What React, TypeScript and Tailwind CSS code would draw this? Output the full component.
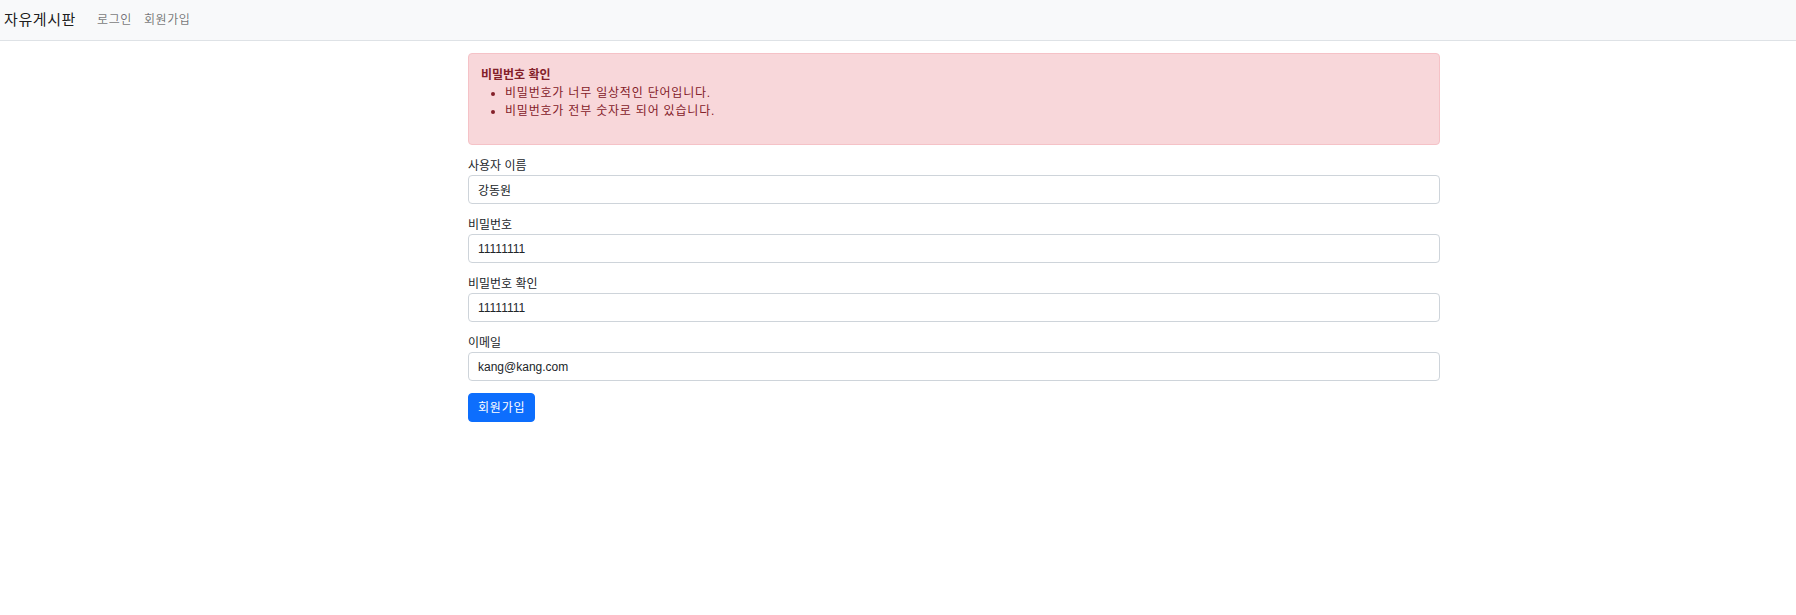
import React from 'react';

const fields = [
  { label: '사용자 이름', value: '강동원', type: 'text' },
  { label: '비밀번호', value: '11111111', type: 'text' },
  { label: '비밀번호 확인', value: '11111111', type: 'text' },
  { label: '이메일', value: 'kang@kang.com', type: 'email' },
];

const errors = ['비밀번호가 너무 일상적인 단어입니다.', '비밀번호가 전부 숫자로 되어 있습니다.'];

const App: React.FC = () => (
  <div className="min-h-[615px] bg-white text-[#212529] text-[12px] leading-[18px] font-['Liberation_Sans','Noto_Sans_CJK_KR',sans-serif]">
    {/* Navbar */}
    <nav className="h-[41px] bg-[#f8f9fa] border-b border-[#dee2e6] flex items-center pl-[4px]">
      <a href="#" className="text-[15px] leading-[22px] tracking-[0.6px] text-black/90 mr-[15px]">자유게시판</a>
      <a href="#" className="px-[6px] tracking-[0.6px] text-black/55">로그인</a>
      <a href="#" className="px-[6px] tracking-[0.6px] text-black/55">회원가입</a>
    </nav>

    <div className="w-[972px] ml-[468px] mt-[12px]">
      {/* Error alert */}
      <div className="bg-[#f8d7da] border border-[#f5c2c7] text-[#842029] rounded-[4px] p-[12px] mb-[12px]">
        <strong className="font-bold">비밀번호 확인</strong>
        <ul className="list-disc pl-[24px] mb-[12px]">
          {errors.map((e) => (
            <li key={e} className="tracking-[0.8px]">{e}</li>
          ))}
        </ul>
      </div>

      <form onSubmit={(e) => e.preventDefault()}>
        {fields.map((f) => (
          <div key={f.label} className="mb-[12px]">
            <label className="block">{f.label}</label>
            <input
              type={f.type}
              readOnly
              value={f.value}
              className="block w-full h-[29px] px-[9px] border border-[#ced4da] rounded-[4px] bg-white text-[#212529] outline-none"
            />
          </div>
        ))}
        <button type="submit" className="h-[29px] px-[9px] tracking-[0.8px] bg-[#0d6efd] text-white rounded-[4px] border border-[#0d6efd]">
          회원가입
        </button>
      </form>
    </div>
  </div>
);

export default App;
